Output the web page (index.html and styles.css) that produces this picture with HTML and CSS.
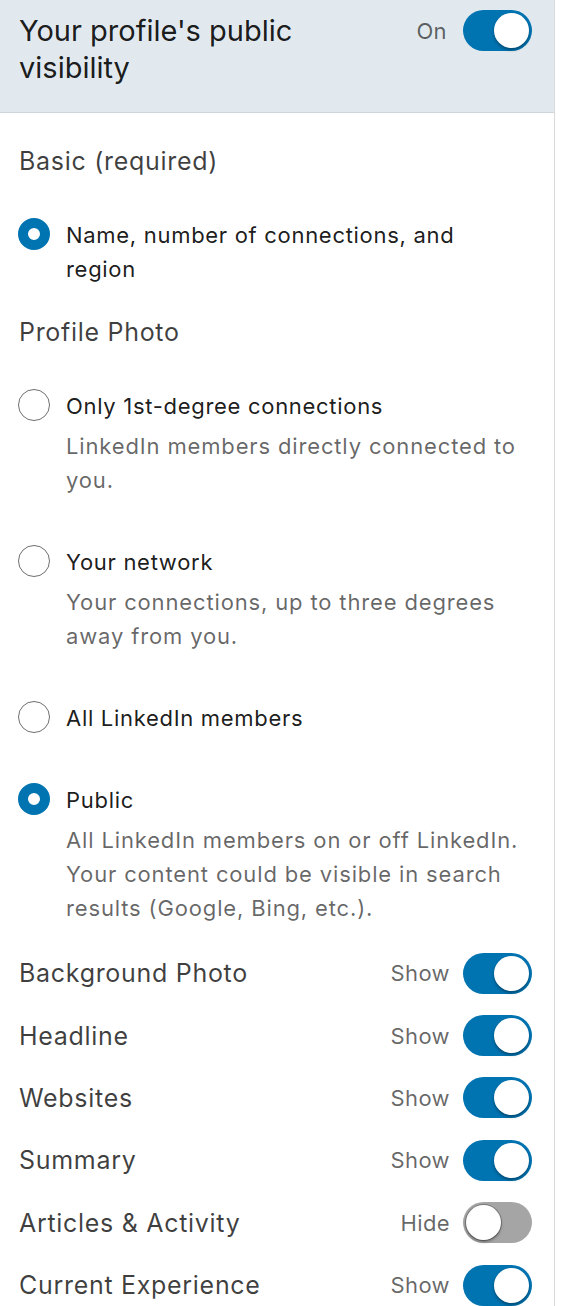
FILE: index.html
```html
<!DOCTYPE html>
<html lang="en">
<head>
<meta charset="utf-8">
<title>Public profile visibility</title>
<link rel="stylesheet" href="styles.css">
</head>
<body>
<div class="panel">
  <header class="panel-head">
    <h1 class="panel-title">Your profile's public visibility</h1>
    <div class="switch">
      <span class="switch-label">On</span>
      <span class="toggle is-on"><span class="knob"></span></span>
    </div>
  </header>

  <div class="panel-body">
    <h2 class="group-title">Basic (required)</h2>
    <div class="option is-checked">
      <span class="radio"></span>
      <div class="option-text">
        <div class="option-label">Name, number of connections, and region</div>
      </div>
    </div>

    <h2 class="group-title group-title--photo">Profile Photo</h2>
    <div class="options">
      <div class="option">
        <span class="radio"></span>
        <div class="option-text">
          <div class="option-label">Only 1st-degree connections</div>
          <div class="option-desc">LinkedIn members directly connected to you.</div>
        </div>
      </div>
      <div class="option">
        <span class="radio"></span>
        <div class="option-text">
          <div class="option-label">Your network</div>
          <div class="option-desc">Your connections, up to three degrees away from you.</div>
        </div>
      </div>
      <div class="option">
        <span class="radio"></span>
        <div class="option-text">
          <div class="option-label">All LinkedIn members</div>
        </div>
      </div>
      <div class="option is-checked">
        <span class="radio"></span>
        <div class="option-text">
          <div class="option-label">Public</div>
          <div class="option-desc">All LinkedIn members on or off LinkedIn. Your content could be visible in search results (Google, Bing, etc.).</div>
        </div>
      </div>
    </div>

    <ul class="fields">
      <li class="field"><span class="field-name">Background Photo</span><span class="switch"><span class="switch-label">Show</span><span class="toggle is-on"><span class="knob"></span></span></span></li>
      <li class="field"><span class="field-name">Headline</span><span class="switch"><span class="switch-label">Show</span><span class="toggle is-on"><span class="knob"></span></span></span></li>
      <li class="field"><span class="field-name">Websites</span><span class="switch"><span class="switch-label">Show</span><span class="toggle is-on"><span class="knob"></span></span></span></li>
      <li class="field"><span class="field-name">Summary</span><span class="switch"><span class="switch-label">Show</span><span class="toggle is-on"><span class="knob"></span></span></span></li>
      <li class="field"><span class="field-name">Articles &amp; Activity</span><span class="switch"><span class="switch-label">Hide</span><span class="toggle"><span class="knob"></span></span></span></li>
      <li class="field"><span class="field-name">Current Experience</span><span class="switch"><span class="switch-label">Show</span><span class="toggle is-on"><span class="knob"></span></span></span></li>
    </ul>
  </div>
</div>
</body>
</html>
```

FILE: styles.css
```css
* { box-sizing: border-box; }

html, body {
  margin: 0;
  padding: 0;
  background: #ffffff;
}

body {
  font-family: Inter, "Noto Sans", sans-serif;
  color: rgba(0, 0, 0, 0.9);
}

.panel {
  width: 555px;
  min-height: 1306px;
  border-right: 1px solid #d9d9d9;
}

.panel-head {
  display: flex;
  align-items: flex-start;
  justify-content: space-between;
  background: #e1e9ee;
  border-bottom: 1px solid #cfd5d9;
  padding: 12px 22px 26px 19px;
}

.panel-title {
  margin: 0;
  max-width: 330px;
  font-size: 29px;
  font-weight: 400;
  line-height: 37px;
  color: rgba(0, 0, 0, 0.9);
}

.switch {
  display: flex;
  align-items: center;
  gap: 13px;
}

.panel-head .switch {
  margin-top: -2px;
  gap: 16px;
}

.switch-label {
  font-size: 22px;
  line-height: 30px;
  letter-spacing: 0.4px;
  color: rgba(0, 0, 0, 0.6);
}

.toggle {
  position: relative;
  display: block;
  width: 69px;
  height: 41px;
  border-radius: 21px;
  background: #a5a5a5;
}

.toggle.is-on {
  background: #0073b1;
}

.knob {
  position: absolute;
  top: 3px;
  left: 3px;
  width: 35px;
  height: 35px;
  border-radius: 50%;
  background: #ffffff;
  box-shadow: 0 0 0 1px rgba(0, 0, 0, 0.25), 0 2px 3px rgba(0, 0, 0, 0.35);
}

.toggle.is-on .knob {
  left: 31px;
  box-shadow: 0 2px 3px rgba(0, 0, 0, 0.35);
}

.panel-body {
  padding: 31px 22px 0 18px;
}

.group-title {
  margin: 0 0 40px;
  padding-left: 1px;
  font-size: 25px;
  font-weight: 400;
  line-height: 34px;
  letter-spacing: 0.7px;
  color: rgba(0, 0, 0, 0.75);
}

.group-title--photo {
  margin-top: 29px;
}

.options {
  display: flex;
  flex-direction: column;
  gap: 48px;
}

.option {
  display: flex;
  align-items: flex-start;
  gap: 16px;
}

.radio {
  flex: none;
  width: 32px;
  height: 32px;
  border-radius: 50%;
  border: 1.5px solid #6f6f6f;
  background: #ffffff;
}

.option.is-checked .radio {
  border: 10px solid #0073b1;
}

.option-text {
  flex: 1;
  padding-right: 12px;
}

.option-label {
  font-size: 22px;
  line-height: 34px;
  letter-spacing: 0.7px;
  color: rgba(0, 0, 0, 0.9);
}

.option-desc {
  margin-top: 6px;
  font-size: 22px;
  line-height: 34px;
  letter-spacing: 0.85px;
  color: rgba(0, 0, 0, 0.6);
}

.fields {
  list-style: none;
  margin: 17px 0 0;
  padding: 0;
}

.field {
  display: flex;
  align-items: center;
  justify-content: space-between;
  height: 62.4px;
  padding-left: 1px;
}

.field-name {
  font-size: 25px;
  line-height: 34px;
  letter-spacing: 0.7px;
  color: rgba(0, 0, 0, 0.75);
}
```
